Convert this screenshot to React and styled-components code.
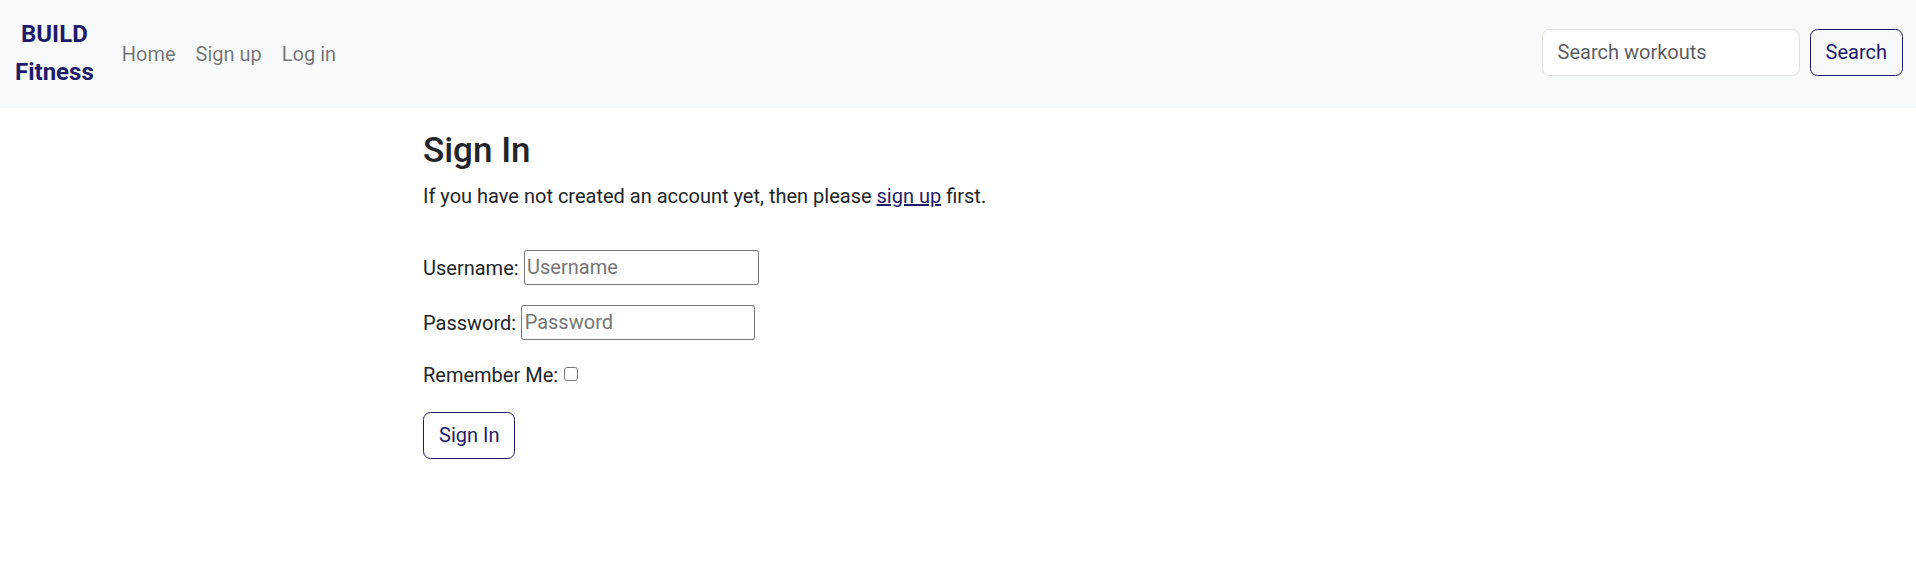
import React from "react";
import styled, { createGlobalStyle } from "styled-components";

const navy = "#1e1b6b";

const GlobalStyle = createGlobalStyle`
  *, *::before, *::after { box-sizing: border-box; }
  body {
    margin: 0;
    background: #fff;
    color: #212529;
    font-family: Roboto, "Liberation Sans", sans-serif;
    font-size: 20px;
    line-height: 30px;
  }
`;

const NavBar = styled.nav`
  display: flex;
  align-items: center;
  justify-content: space-between;
  background: #f8f9fa;
  padding: 10px 13px 10px 15px;
  height: 107.5px;
`;

const Left = styled.div`
  display: flex;
  align-items: center;
`;

const Brand = styled.a`
  display: block;
  padding: 6.25px 0;
  margin-right: 18px;
  font-size: 24px;
  line-height: 37.5px;
  font-weight: 700;
  text-align: center;
  color: ${navy};
  text-decoration: none;
`;

const NavLinks = styled.ul`
  display: flex;
  list-style: none;
  margin: 0;
  padding: 0;
`;

const NavLink = styled.a`
  display: block;
  padding: 10px;
  color: rgba(0, 0, 0, 0.55);
  text-decoration: none;
`;

const SearchForm = styled.form`
  display: flex;
  align-items: center;
  margin-top: -3px;
`;

const SearchInput = styled.input`
  width: 258px;
  height: 47px;
  margin-right: 10px;
  padding: 7.5px 15px;
  font: inherit;
  color: #212529;
  background: #fff;
  border: 1px solid #dee2e6;
  border-radius: 7.5px;
  outline: none;
  &::placeholder { color: rgba(33, 37, 41, 0.75); }
`;

const OutlineButton = styled.button`
  padding: 7.5px 15px;
  font: inherit;
  line-height: 30px;
  color: ${navy};
  background: transparent;
  border: 1px solid ${navy};
  border-radius: 7.5px;
  cursor: pointer;
`;

const Container = styled.main`
  max-width: 1650px;
  margin: 0 auto;
`;

const Column = styled.div`
  width: 66.6667%;
  margin-left: 16.6667%;
  padding: 0 15px;
`;

const Title = styled.h3`
  margin: 22px 0 9px;
  font-size: 35px;
  line-height: 42px;
  font-weight: 500;
`;

const Lead = styled.p`
  margin: 0 0 20px;
  a { color: ${navy}; }
`;

const Form = styled.form`
  padding-top: 19px;
`;

const Field = styled.p`
  margin: 0 0 20px;
`;

const TextInput = styled.input`
  width: ${(p) => p.$w}px;
  height: 35px;
  padding: 1.25px 2.5px;
  font: inherit;
  line-height: 30px;
  color: #212529;
  border: 1px solid #767676;
  border-radius: 2.5px;
  outline: none;
  &::placeholder { color: #757575; }
`;

const Check = styled.input`
  appearance: none;
  width: 14px;
  height: 14px;
  margin: 0 0 1px 1px;
  border: 1px solid #767676;
  border-radius: 3px;
  background: #fff;
`;

const SubmitButton = styled(OutlineButton)`
  margin-top: 2px;
  background: #fff;
`;

export default function App() {
  return (
    <>
      <GlobalStyle />
      <NavBar>
        <Left>
          <Brand href="#">
            BUILD
            <br />
            Fitness
          </Brand>
          <NavLinks>
            <li><NavLink href="#">Home</NavLink></li>
            <li><NavLink href="#">Sign up</NavLink></li>
            <li><NavLink href="#">Log in</NavLink></li>
          </NavLinks>
        </Left>
        <SearchForm onSubmit={(e) => e.preventDefault()}>
          <SearchInput type="search" placeholder="Search workouts" />
          <OutlineButton type="submit">Search</OutlineButton>
        </SearchForm>
      </NavBar>
      <Container>
        <Column>
          <Title>Sign In</Title>
          <Lead>
            If you have not created an account yet, then please <a href="#">sign up</a> first.
          </Lead>
          <Form onSubmit={(e) => e.preventDefault()}>
            <Field>
              <label htmlFor="id_login">Username:</label>{" "}
              <TextInput id="id_login" type="text" placeholder="Username" $w={235} />
            </Field>
            <Field>
              <label htmlFor="id_password">Password:</label>{" "}
              <TextInput id="id_password" type="password" placeholder="Password" $w={234} />
            </Field>
            <Field>
              <label htmlFor="id_remember">Remember Me:</label>{" "}
              <Check id="id_remember" type="checkbox" />
            </Field>
            <SubmitButton type="submit">Sign In</SubmitButton>
          </Form>
        </Column>
      </Container>
    </>
  );
}
